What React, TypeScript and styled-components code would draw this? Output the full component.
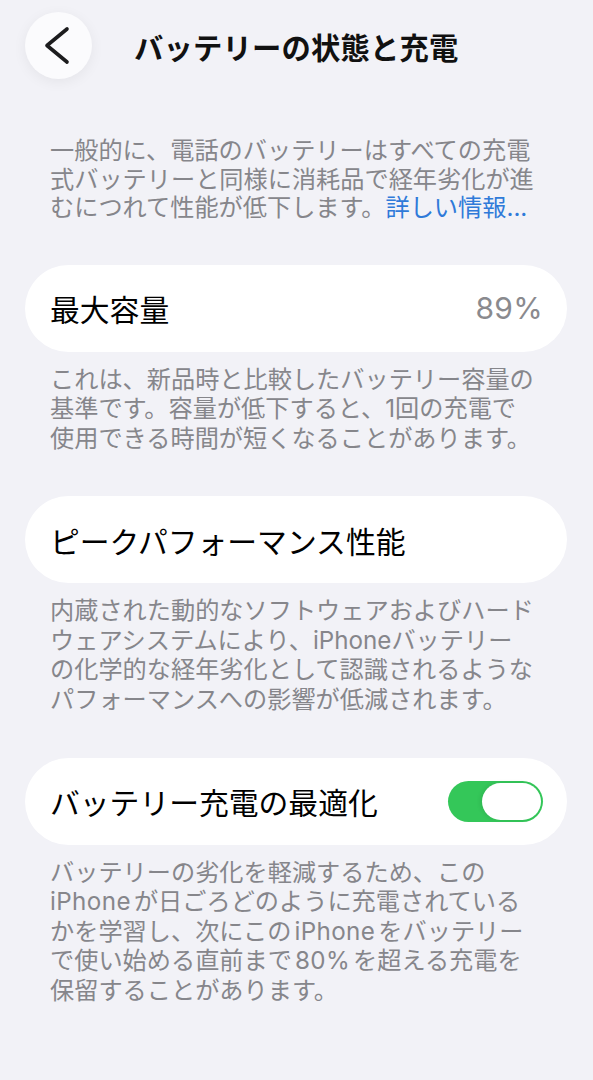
import React from "react";
import styled, { createGlobalStyle } from "styled-components";

const GlobalStyle = createGlobalStyle`
  html, body {
    margin: 0;
    padding: 0;
    background: #f2f2f7;
  }
  body {
    font-family: "Inter", "Noto Sans CJK JP", "Noto Sans", sans-serif;
    -webkit-font-smoothing: antialiased;
  }
`;

const Page = styled.div`
  width: 593px;
  min-height: 1080px;
  box-sizing: border-box;
  padding: 12px 26px 0 25px;
  display: flex;
  flex-direction: column;
`;

const Header = styled.header`
  display: flex;
  align-items: center;
  height: 67px;
  gap: 42px;
`;

const BackButton = styled.button`
  width: 67px;
  height: 67px;
  border-radius: 50%;
  border: none;
  padding: 0;
  background: #fbfbfd;
  box-shadow: 0 3px 14px rgba(0, 0, 0, 0.06);
  display: flex;
  align-items: center;
  justify-content: center;
  flex: none;
`;

const Title = styled.h1`
  margin: 0;
  font-size: 29.3px;
  font-weight: 700;
  color: #111;
  letter-spacing: 0.2px;
`;

const Intro = styled.p`
  margin: 58px 0 0;
  padding: 0 25px;
  font-size: 24.2px;
  line-height: 28.5px;
  color: #86868b;
  white-space: nowrap;
`;

const Link = styled.span`
  color: #2f7ad9;
`;

const Card = styled.div<{ $top: number }>`
  margin-top: ${(p) => p.$top}px;
  height: 87px;
  border-radius: 44px;
  background: #ffffff;
  display: flex;
  align-items: center;
  justify-content: space-between;
  padding: 0 24px 0 25px;
`;

const Label = styled.span`
  font-size: 29.8px;
  color: #000;
`;

const Value = styled.span`
  font-size: 30px;
  color: #8a8a8e;
  letter-spacing: 0.3px;
`;

const Footnote = styled.p`
  margin: 13px 0 0;
  padding: 0 25px;
  font-size: 24.2px;
  line-height: 29.6px;
  color: #86868b;
  white-space: nowrap;
`;

const Latin = styled.span<{ $before?: boolean }>`
  letter-spacing: 0.4px;
  margin-right: 3px;
  margin-left: ${(p) => (p.$before ? "3px" : "0")};
`;

const Toggle = styled.div`
  position: relative;
  width: 95px;
  height: 41px;
  border-radius: 21px;
  background: #34c759;
  flex: none;
`;

const Knob = styled.div`
  position: absolute;
  top: 2px;
  right: 2px;
  width: 59px;
  height: 37px;
  border-radius: 19px;
  background: #ffffff;
  box-shadow: -2px 0 4px rgba(0, 0, 0, 0.08);
`;

export default function App() {
  return (
    <>
      <GlobalStyle />
      <Page>
        <Header>
          <BackButton aria-label="戻る">
            <svg width="67" height="67" viewBox="0 0 67 67">
              <path
                d="M42 17 L22 33.5 L42 50"
                fill="none"
                stroke="#1c1c1e"
                strokeWidth="3.6"
                strokeLinecap="round"
                strokeLinejoin="round"
              />
            </svg>
          </BackButton>
          <Title>バッテリーの状態と充電</Title>
        </Header>

        <Intro>
          一般的に、電話のバッテリーはすべての充電
          <br />
          式バッテリーと同様に消耗品で経年劣化が進
          <br />
          むにつれて性能が低下します。<Link>詳しい情報...</Link>
        </Intro>

        <Card $top={42}>
          <Label>最大容量</Label>
          <Value>89%</Value>
        </Card>
        <Footnote>
          これは、新品時と比較したバッテリー容量の
          <br />
          基準です。容量が低下すると、1回の充電で
          <br />
          使用できる時間が短くなることがあります。
        </Footnote>

        <Card $top={43}>
          <Label>ピークパフォーマンス性能</Label>
        </Card>
        <Footnote>
          内蔵された動的なソフトウェアおよびハード
          <br />
          ウェアシステムにより、iPhoneバッテリー
          <br />
          の化学的な経年劣化として認識されるような
          <br />
          パフォーマンスへの影響が低減されます。
        </Footnote>

        <Card $top={43}>
          <Label>バッテリー充電の最適化</Label>
          <Toggle>
            <Knob />
          </Toggle>
        </Card>
        <Footnote>
          バッテリーの劣化を軽減するため、この
          <br />
          <Latin>iPhone</Latin>が日ごろどのように充電されている
          <br />
          かを学習し、次にこの<Latin $before>iPhone</Latin>をバッテリー
          <br />
          で使い始める直前まで<Latin $before>80%</Latin>を超える充電を
          <br />
          保留することがあります。
        </Footnote>
      </Page>
    </>
  );
}
